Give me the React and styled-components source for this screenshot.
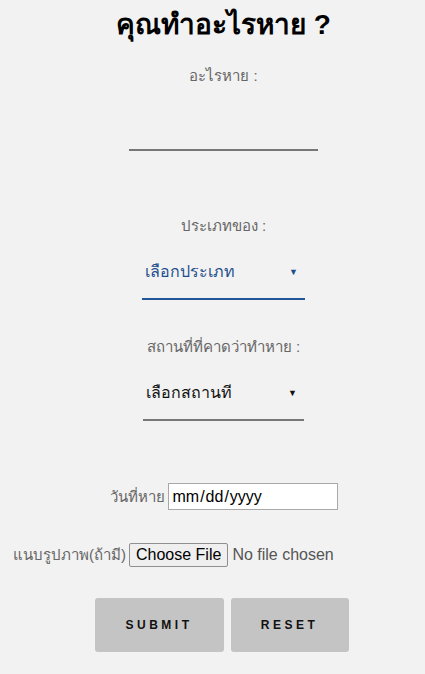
import styled, { createGlobalStyle } from 'styled-components';

const GlobalStyle = createGlobalStyle`
  html, body {
    margin: 0;
    padding: 0;
    background: #f2f2f2;
  }
  body {
    font-family: 'Liberation Sans', Arial, sans-serif;
  }
`;

function App() {
  return (
    <>
      <GlobalStyle />
      <Page>
        <Title>คุณทำอะไรหาย ?</Title>

        <Label>อะไรหาย :</Label>
        <TextInput type="text" />

        <Label $top={66}>ประเภทของ :</Label>
        <SelectWrap $width={163} $active>
          <Select $active defaultValue="">
            <option value="">เลือกประเภท</option>
            <option value="wallet">กระเป๋าเงิน</option>
            <option value="phone">โทรศัพท์</option>
          </Select>
          <Arrow $active>▼</Arrow>
        </SelectWrap>

        <Label $top={38}>สถานที่ที่คาดว่าทำหาย :</Label>
        <SelectWrap $width={161}>
          <Select defaultValue="">
            <option value="">เลือกสถานที่</option>
            <option value="canteen">โรงอาหาร</option>
            <option value="library">ห้องสมุด</option>
          </Select>
          <Arrow>▼</Arrow>
        </SelectWrap>

        <Row $top={62}>
          <InlineLabel>วันที่หาย</InlineLabel>
          <DateInput type="date" />
        </Row>

        <Row $top={33} $left>
          <InlineLabel>แนบรูปภาพ(ถ้ามี)</InlineLabel>
          <FileInput type="file" />
        </Row>

        <Buttons>
          <ActionButton type="submit" $width={129}>SUBMIT</ActionButton>
          <ActionButton type="reset" $width={118}>RESET</ActionButton>
        </Buttons>
      </Page>
    </>
  );
}

export default App;

const Page = styled.form`
  display: flex;
  flex-direction: column;
  align-items: center;
  min-height: 674px;
  box-sizing: border-box;
  padding: 7px 0 0 22px;
`;

const Title = styled.h2`
  margin: 0;
  font-size: 28px;
  font-weight: 700;
  line-height: 36px;
  color: #000;
`;

const Label = styled.div`
  margin-top: ${({ $top }) => ($top ? $top : 24)}px;
  font-size: 15px;
  line-height: 18px;
  color: #666;
`;

const TextInput = styled.input`
  margin-top: 26px;
  width: 189px;
  height: 38px;
  box-sizing: content-box;
  padding: 0;
  border: none;
  border-bottom: 2px solid #777;
  background: transparent;
  outline: none;
  font-size: 15px;
`;

const SelectWrap = styled.div`
  position: relative;
  margin-top: 10px;
  width: ${({ $width }) => $width}px;
  border-bottom: 2px solid ${({ $active }) => ($active ? '#21569a' : '#777')};
`;

const Select = styled.select`
  display: block;
  width: 100%;
  height: 53px;
  padding: 0 0 0 3px;
  border: none;
  background: transparent;
  appearance: none;
  outline: none;
  font-family: 'Liberation Sans', Arial, sans-serif;
  font-size: 16px;
  color: ${({ $active }) => ($active ? '#1d4f8c' : '#111')};
`;

const Arrow = styled.span`
  position: absolute;
  right: 7px;
  top: 50%;
  transform: translateY(-50%);
  font-size: 9px;
  line-height: 9px;
  color: ${({ $active }) => ($active ? '#1d4f8c' : '#111')};
  pointer-events: none;
`;

const Row = styled.div`
  display: flex;
  align-items: center;
  gap: 3px;
  white-space: nowrap;
  flex-shrink: 0;
  margin-top: ${({ $top }) => $top}px;
  align-self: ${({ $left }) => ($left ? 'flex-start' : 'center')};
  margin-left: ${({ $left }) => ($left ? '-9px' : '0')};
`;

const InlineLabel = styled.span`
  font-size: 15px;
  color: #666;
`;

const DateInput = styled.input`
  width: 170px;
  height: 27px;
  box-sizing: border-box;
  padding: 0 3px;
  border: 1px solid #a9a9a9;
  background: #fff;
  font-family: 'Liberation Sans', Arial, sans-serif;
  font-size: 16px;
  color: #000;

  &::-webkit-calendar-picker-indicator {
    display: none;
  }
`;

const FileInput = styled.input`
  font-family: 'Liberation Sans', Arial, sans-serif;
  font-size: 16px;
  color: #555;

  &::file-selector-button {
    font-family: 'Liberation Sans', Arial, sans-serif;
    font-size: 16px;
    color: #000;
    background: #efefef;
    border: 1px solid #8f8f8f;
    border-radius: 2px;
    padding: 2px 6px;
    margin-right: 4px;
  }
`;

const Buttons = styled.div`
  display: flex;
  gap: 7px;
  margin-top: 31px;
  margin-left: -4px;
`;

const ActionButton = styled.button`
  width: ${({ $width }) => $width}px;
  height: 54px;
  border: none;
  border-radius: 3px;
  background: #c4c4c4;
  font-family: 'Liberation Sans', Arial, sans-serif;
  font-size: 12px;
  font-weight: 700;
  letter-spacing: 3.5px;
  color: #111;
  cursor: pointer;
`;
